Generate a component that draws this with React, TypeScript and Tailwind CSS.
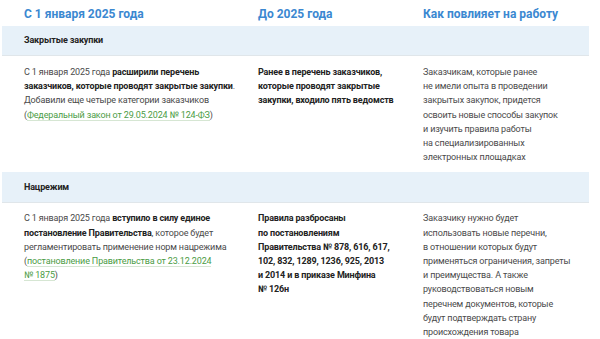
import React from 'react';

const link = 'text-[#4b9c45] border-b border-[#d6e6d3]';

const App: React.FC = () => {
  return (
    <div className="w-[600px] h-[339px] overflow-hidden bg-white" style={{ fontFamily: 'Roboto, "Liberation Sans", sans-serif' }}>
      <div className="ml-[2px] w-[587px] text-[9px] tracking-[-0.15px] leading-[14.2px] text-[#4a4a4a] whitespace-nowrap">
        {/* Шапка */}
        <div className="grid grid-cols-[256px_165px_166px] h-[26px] pt-[6px] text-[12px] tracking-normal font-bold leading-[16px] text-[#3b88d1]">
          <div className="pl-[22px]">С 1 января 2025 года</div>
          <div>До 2025 года</div>
          <div>Как повлияет на работу</div>
        </div>

        {/* Закрытые закупки */}
        <div className="h-[30px] bg-[#e7f1f9] border-b border-[#e0e6ea] pl-[22px] flex items-center font-bold text-[#222]">
          Закрытые закупки
        </div>
        <div className="grid grid-cols-[256px_165px_166px] pt-[9px] pb-[8px]">
          <div className="pl-[22px]">
            С 1 января 2025 года <b className="text-[#222]">расширили перечень<br />заказчиков, которые проводят закрытые закупки</b>.<br />
            Добавили еще четыре категории заказчиков<br />
            (<span className={link}>Федеральный закон от 29.05.2024 № 124-ФЗ</span>)
          </div>
          <div className="font-bold text-[#222]">
            Ранее в перечень заказчиков,<br />которые проводят закрытые<br />закупки, входило пять ведомств
          </div>
          <div>
            Заказчикам, которые ранее<br />не имели опыта в проведении<br />закрытых закупок, придется<br />освоить новые способы закупок<br />и изучить правила работы<br />на специализированных<br />электронных площадках
          </div>
        </div>

        {/* Нацрежим */}
        <div className="h-[31px] bg-[#e7f1f9] border-b border-[#e0e6ea] pl-[22px] flex items-center font-bold text-[#222]">
          Нацрежим
        </div>
        <div className="grid grid-cols-[256px_165px_166px] pt-[8px]">
          <div className="pl-[22px]">
            С 1 января 2025 года <b className="text-[#222]">вступило в силу единое<br />постановление Правительства</b>, которое будет<br />
            регламентировать применение норм нацрежима<br />
            (<span className={link}>постановление Правительства от 23.12.2024</span><br />
            <span className={link}>№ 1875</span>)
          </div>
          <div className="font-bold text-[#222]">
            Правила разбросаны<br />по постановлениям<br />Правительства № 878, 616, 617,<br />102, 832, 1289, 1236, 925, 2013<br />и 2014 и в приказе Минфина<br />№ 126н
          </div>
          <div>
            Заказчику нужно будет<br />использовать новые перечни,<br />в отношении которых будут<br />применяться ограничения, запреты<br />и преимущества. А также<br />руководствоваться новым<br />перечнем документов, которые<br />будут подтверждать страну<br />происхождения товара
          </div>
        </div>
      </div>
    </div>
  );
};

export default App;
